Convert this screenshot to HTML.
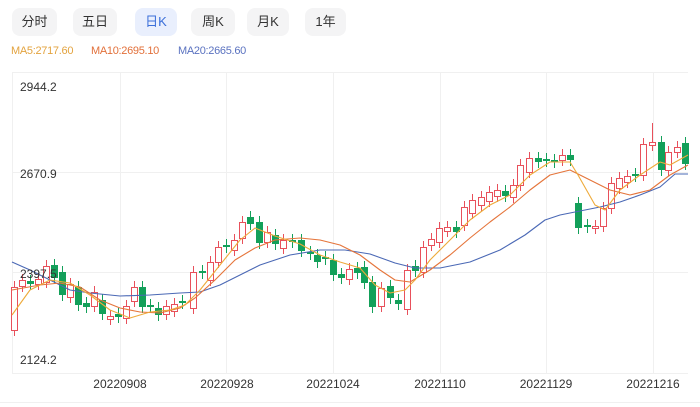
<!DOCTYPE html>
<html><head><meta charset="utf-8"><style>
body{margin:0;width:700px;height:407px;background:#fff;font-family:"Liberation Sans","Noto Sans CJK SC",sans-serif;overflow:hidden;position:relative}
.b{position:absolute;top:8px;height:28px;line-height:28px;border-radius:8px;background:#f4f4f5;color:#333;font-size:13px;text-align:center}
.ma{position:absolute;top:45px;font-size:11px;letter-spacing:-0.3px}
svg{position:absolute;left:0;top:0}
</style></head><body>
<div class="b" style="left:12px;width:45px">分时</div>
<div class="b" style="left:73px;width:44px">五日</div>
<div class="b" style="left:135px;width:42px;background:#e9effd;color:#3b6fd9">日K</div>
<div class="b" style="left:191px;width:44px">周K</div>
<div class="b" style="left:247px;width:42px">月K</div>
<div class="b" style="left:305px;width:41px">1年</div>
<div class="ma" style="left:11px;color:#e3a33f">MA5:2717.60</div>
<div class="ma" style="left:91px;color:#e2703a">MA10:2695.10</div>
<div class="ma" style="left:178px;color:#5a72c0">MA20:2665.60</div>
<svg width="700" height="407" id="s">
<g stroke="#f0f0f0" stroke-width="1">
<line x1="12" y1="72.5" x2="688" y2="72.5"/><line x1="12" y1="172.5" x2="688" y2="172.5"/><line x1="12" y1="272.5" x2="688" y2="272.5"/><line x1="12" y1="373.5" x2="688" y2="373.5"/><line x1="0" y1="402.5" x2="700" y2="402.5"/>
<line x1="12.5" y1="72" x2="12.5" y2="373"/><line x1="120.5" y1="72" x2="120.5" y2="373"/><line x1="226.5" y1="72" x2="226.5" y2="373"/><line x1="333.5" y1="72" x2="333.5" y2="373"/><line x1="440.5" y1="72" x2="440.5" y2="373"/><line x1="546.5" y1="72" x2="546.5" y2="373"/><line x1="653.5" y1="72" x2="653.5" y2="373"/>
</g>
<g id="c"></g>
<g fill="none" stroke-width="1.1" stroke-linejoin="round">
<polyline stroke="#4a68b5" points="12,262 30,270 50,280 70,290 90,293 120,296 150,295 180,293 200,292 220,285 240,275 260,265 290,255 320,250 345,250 370,254 395,263 415,268 440,268 470,262 500,250 525,235 545,220 560,215 580,211 600,207 620,202 640,195 660,187 675,174 688,174"/>
<polyline stroke="#e5743a" points="12,290 40,285 60,283 80,287 100,300 120,308 140,312 160,313 180,308 195,298 215,280 235,260 255,248 275,240 300,238 320,240 340,245 360,255 380,270 395,280 410,282 430,270 450,255 470,238 490,222 510,207 530,190 550,175 570,170 590,180 610,190 630,195 650,190 670,175 688,165"/>
<polyline stroke="#eeaa3a" points="12,315 30,290 50,280 70,283 90,295 110,310 130,318 150,312 170,310 185,305 200,290 220,265 240,240 255,228 275,236 300,244 320,255 340,262 360,268 375,285 390,293 405,290 415,280 430,260 450,240 470,220 490,205 510,195 530,175 550,162 570,162 578,175 595,205 605,210 620,190 640,175 660,162 670,165 688,155"/>
</g>
<g font-size="12" fill="#333" font-family="Liberation Sans, sans-serif">
<text x="20" y="91">2944.2</text><text x="20" y="178">2670.9</text><text x="20" y="278">2397.5</text><text x="20" y="364">2124.2</text>
<g text-anchor="middle"><text x="120" y="388">20220908</text><text x="227" y="388">20220928</text><text x="333" y="388">20221024</text><text x="440" y="388">20221110</text><text x="546" y="388">20221129</text><text x="653" y="388">20221216</text></g>
</g>
</svg>
<script>
var d=[[14,287,330,1],[22,280,286,1],[30,281,284,0],[38,279,284,1],[46,266,282,1],[54,265,278,0],[62,272,295,0],[70,284,297,1],[78,287,305,0],[86,303,307,0],[94,292,306,1],[102,300,314,0],[110,316,319,1],[118,314,317,0],[126,306,318,1],[134,287,301,1],[142,287,307,0],[150,305,307,0],[158,308,315,0],[166,306,314,1],[174,304,311,1],[182,301,303,0],[193,272,308,1],[202,271,273,0],[210,262,280,1],[218,247,262,1],[226,245,247,0],[234,240,250,1],[242,222,238,1],[250,217,224,0],[259,222,243,0],[267,232,242,1],[275,235,244,0],[283,240,248,1],[292,240,242,0],[301,240,251,0],[310,252,254,0],[317,255,262,0],[325,257,259,0],[333,260,275,0],[341,274,278,0],[349,269,279,1],[357,268,273,0],[364,267,283,0],[372,282,307,0],[381,288,306,1],[390,286,298,0],[398,300,304,0],[407,270,309,1],[415,266,271,0],[423,247,272,1],[431,239,245,1],[439,228,242,1],[447,227,231,1],[456,227,232,0],[464,207,225,1],[472,200,213,1],[481,197,205,1],[489,192,201,1],[497,190,196,1],[505,191,196,0],[513,185,197,1],[520,165,185,1],[529,158,172,1],[538,158,162,0],[546,159,161,0],[554,160,162,0],[562,155,160,1],[570,155,160,0],[578,203,228,0],[587,225,227,0],[595,226,228,1],[603,208,226,1],[611,183,208,1],[619,178,188,1],[627,176,182,1],[635,174,176,0],[643,144,175,1],[652,142,145,1],[661,142,170,0],[668,152,170,1],[677,147,152,1],[685,143,164,0]];
var h='';d.forEach(function(c){var col=c[3]?'#e8505b':'#13a05a';var wt=c[1]-6,wb=c[2]+6;if(c[0]==652)wt=123;
h+='<line x1="'+(c[0]+.5)+'" y1="'+wt+'" x2="'+(c[0]+.5)+'" y2="'+wb+'" stroke="'+col+'"/>';
var hh=Math.max(c[2]-c[1],2);
if(c[3])h+='<rect x="'+(c[0]-2.5)+'" y="'+(c[1]+.5)+'" width="6" height="'+hh+'" fill="#fff" stroke="'+col+'"/>';
else h+='<rect x="'+(c[0]-3)+'" y="'+c[1]+'" width="7" height="'+hh+'" fill="'+col+'"/>';});
document.getElementById('c').innerHTML=h;
</script>
</body></html>
